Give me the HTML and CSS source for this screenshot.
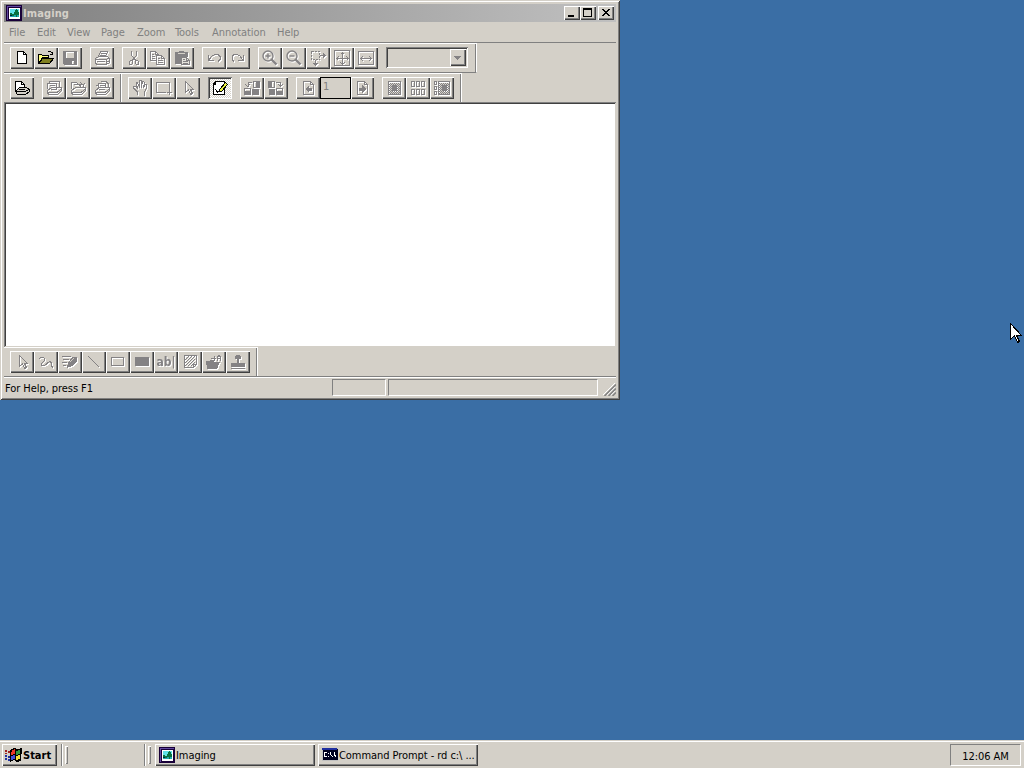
FILE: index.html
```html
<!DOCTYPE html>
<html lang="en">
<head>
    <meta charset="UTF-8">
    <title>Imaging</title>
    <link rel="stylesheet" href="styles.css">
</head>
<body>
    <svg width="0" height="0" class="defs">
        <symbol id="app" viewBox="0 0 16 16">
            <path fill="#180038" d="M0 0h16v16H0z"/><path fill="#6048a0" d="M1 1h14v1H2v13H1z"/>
            <path fill="#fff" d="M3 3h11v11H3z"/><path fill="#60e0e8" d="M4 4h9v5H4z"/><path fill="#20a8b0" d="M4 9h9v3H4z"/>
            <path fill="#087040" d="M10 4h1v1h1v2h1v3h-2v2h-1v-2H8V7h1V5h1zM4 8h2v1h2v2H4z"/><path fill="#002040" d="M4 10h2v1H4z"/>
        </symbol>
        <symbol id="arrow" viewBox="0 0 16 16"><path class="l" d="M5.5 1.5v11l3-3 2 5 2-1-2-4h3z"/></symbol>
    </svg>

    <div class="window">
        <div class="titlebar">
            <svg class="icon"><use href="#app"/></svg>
            <span class="title">Imaging</span>
            <button class="cap"><svg viewBox="0 0 12 10"><path d="M2 7h6v2H2z"/></svg></button>
            <button class="cap"><svg viewBox="0 0 12 10"><path fill-rule="evenodd" d="M1 0h9v9H1zM2 2v6h7V2z"/></svg></button>
            <button class="cap close"><svg viewBox="0 0 12 10"><path d="M2 1h2v1h1v1h2V2h1V1h2v1H9v1H8v1H7v1h1v1h1v1h1v1H8V7H7V6H5v1H4v1H2V7h1V6h1V5h1V4H4V3H3V2H2z"/></svg></button>
        </div>
        <div class="menu">
            <span class="m1">File</span><span class="m2">Edit</span><span class="m3">View</span><span class="m4">Page</span><span class="m5">Zoom</span><span class="m6">Tools</span><span class="m7">Annotation</span><span class="m8">Help</span>
        </div>
        <div class="toolbars">
            <div class="band standard">
                <div class="group">
                    <button class="on"><svg class="icon"><path fill="#fff" stroke="#000" d="M3.5 1.5h6l3 3v9h-9z"/><path class="l" stroke="#000" d="M9.5 1.5v3h3"/></svg></button>
                    <button class="on"><svg class="icon"><path fill="#ffff80" stroke="#000" d="M.5 13.5v-9h3l1 1h6v2h-6z"/><path fill="#808020" stroke="#000" d="M.5 13.5l4-5h11l-4 5z"/><path class="l" stroke="#000" d="M9.5 2.5l1-1h2l2 2m0-2v3h-3"/></svg></button>
                    <button><svg class="icon"><path class="s" fill-rule="evenodd" d="M1 1h14v14H2L1 14zM4 2v6h8V2zM10 11v3h2v-3z"/></svg></button>
                </div>
                <div class="group">
                    <button><svg class="icon"><path class="l" d="M4.5 6.5l2-5h7l-2 5M6.5 3.5h5m-6 2h5M1.5 8.5l3-2h9l2 2v4l-3 2h-10l-1-2zM1.5 9.5h11v4M12.5 9.5l3-2M3 11.5h8m2 0h2"/></svg></button>
                </div>
                <div class="group">
                    <button><svg class="icon"><path class="l" d="M5.5 1v4l2 3 2 2M10.5 1v4l-2 3-2 2M4.5 10.5h2v3l-1 1h-2v-3zM9.5 10.5h2l1 1v3h-2l-1-1z"/></svg></button>
                    <button><svg class="icon"><path class="l" d="M6 10.5H.5v-9h5l3 3M5.5 1.5v3h3M2 4.5h2m-2 2h3m-3 2h3M6.5 5.5h5l3 3v6h-8zM11.5 5.5v3h3M8 8.5h2m-2 2h5m-5 2h5"/></svg></button>
                    <button><svg class="icon"><path class="s" d="M1 2h4V1h5v1h4v5H7v7H1z"/><path fill="#d4d0c8" d="M4 3h7v1H4z"/><path fill="#e4e2dc" stroke="#848284" d="M7.5 7.5h5l3 3v4h-8z"/><path class="l" d="M9 9.5h2m-2 2h5m-5 2h5M12.5 7.5v3h3"/></svg></button>
                </div>
                <div class="group">
                    <button><svg class="icon"><path class="l" d="M2.5 5v5.5H8M3 10l3-4 3-1.5h3l2 2v3l-2 2"/></svg></button>
                    <button><svg class="icon"><path class="l" d="M13.5 5v5.5H8M13 10l-3-4-3-1.5H4l-2 2v3l2 2"/></svg></button>
                </div>
                <div class="group">
                    <button><svg class="icon smooth"><circle class="l bold" cx="6" cy="6" r="5"/><path class="l bold" d="M3.500 6h5M6 3.500v5"/><path class="l handle-line" d="M9.500 9.500l5 5"/></svg></button>
                    <button><svg class="icon smooth"><circle class="l bold" cx="6" cy="6" r="5"/><path class="l bold" d="M3.500 6h5"/><path class="l handle-line" d="M9.500 9.500l5 5"/></svg></button>
                    <button><svg class="icon"><path class="l dot" d="M1.5 1.5h8v8h-8z"/><path class="l" d="M10 5.5h5M13 3.5l2 2-2 2M5.5 10v5M3.5 13l2 2 2-2"/></svg></button>
                    <button><svg class="icon"><path class="l" d="M.5.5h15v15H.5zM8.500 2v12M2 8.500h12M6.500 4.500l2-2 2 2M6.500 12.500l2 2 2-2M4.500 6.500l-2 2 2 2M12.500 6.500l2 2-2 2"/></svg></button>
                    <button><svg class="icon"><path class="l" d="M.5 1.5h15v13H.5zM2 8.5h12M5 6L2.5 8.5 5 11M11 6l2.5 2.5L11 11"/></svg></button>
                </div>
                <div class="combo"><span><svg viewBox="0 0 8 4"><path class="s" d="M0 0h7v1H6v1H5v1H4v1H3V3H2V2H1V1H0z"/></svg></span></div>
            </div>
            <div class="band imaging">
                <div class="group">
                    <button class="on"><svg class="icon"><path fill="#fff" stroke="#000" d="M1.5 11.5v-10h6l3 3v4l-7 4z"/><path class="l" stroke="#000" d="M7.5 1.5v3h3"/><path fill="#d4d0c8" stroke="#000" d="M1.500 11.500l4-4h7l3 2v2l-4 3h-8z"/><path class="l" stroke="#000" d="M2 11.500h9l4-2M5 9.500h6"/></svg></button>
                </div>
                <div class="group">
                    <button><svg class="icon"><path class="l" d="M1.5 9V3.5h9V9M3.5 3V1.5h10v5M4 5.5h5M1.5 10.5l4-3h10v3l-4 4h-9l-1-2zM2 12.500h9l4-3M5 9.5h6"/></svg></button>
                    <button><svg class="icon"><path class="l" d="M1.5 9V2.5h5l2 2h5v3M4 4.5h5l2 2M1.5 10.5l4-3h10v3l-4 4h-9l-1-2zM2 12.500h9l4-3M10 2l3 3 2-2"/></svg></button>
                    <button><svg class="icon"><path class="l" d="M4.5 8V3.5h7V8M7 1.5h5l2 2v3M2 5.5h3m1 0h5M1.5 10.5l4-3h10v3l-4 4h-9l-1-2zM2 12.500h9l4-3M5 9.5h6"/></svg></button>
                </div>
                <i class="vsep"></i>
                <div class="group">
                    <button><svg class="icon"><path class="l" d="M5.5 15v-3l-4-4v-2h2l2 2-1-5V2.5h1l2 5V.5h2v7l1-6h1l1 1-1 5 2-3h1v3l-2 5v3"/></svg></button>
                    <button><svg class="icon"><path class="l" d="M10 12.5H.5v-10h13V10M11 12.5h5M13.5 10v5"/></svg></button>
                    <button><svg class="icon"><use href="#arrow"/></svg></button>
                </div>
                <div class="group">
                    <button class="on pressed"><svg class="icon"><path fill="#fff" stroke="#000" stroke-width="1.500" d="M3.5 1.5h9v13h-11v-10zM3.5 1.5v3h-2"/><path fill="none" stroke="#000" d="M3.500 9.500l2 2.500 3-1"/><path fill="#e8f040" stroke="#000" d="M7.5 9.500l6-7 2 2-6 7h-2z"/></svg></button>
                </div>
                <div class="group">
                    <button><svg class="icon"><path class="l" d="M9.5 1.5h6v6h-6zM8 2.5h-4v4M1.500 4.500l2 2 2-2M.5 8.5h6v6h-6z"/><path class="s" d="M12 2h4v6h-4zM8 9h7v6H8zM1 11h5v4H1z"/></svg></button>
                    <button><svg class="icon"><path class="l" d="M.5 1.5h6v6h-6zM8 2.5h4v4M10.500 4.500l2 2 2-2M8.5 8.500h6v6h-6z"/><path class="s" d="M1 2h3v6H1zM1 9h6v6H1zM9 11h5v4H9z"/></svg></button>
                </div>
                <div class="group">
                    <button><svg class="icon"><path class="l" d="M3.5 1.5h7l3 3v10h-10zM10.5 1.5v3h3"/><path class="s" d="M5 9l4-4v3h3v3H9v2z"/></svg></button>
                    <span class="page">1</span>
                    <button class="next"><svg class="icon"><path class="l" d="M2.5 1.5h7l3 3v10h-10zM9.5 1.5v3h3"/><path class="s" d="M11 9L7 5v3H4v3h3v2z"/></svg></button>
                </div>
                <div class="group">
                    <button><svg class="icon"><path class="l" d="M2.5 1.5h12v13h-12z"/><path class="l mesh" d="M4 3.5h10M4 5.5h10M4 7.5h10M4 9.5h10M4 11.5h10M4 13.5h10M3 4.500h11M3 6.500h11M3 8.500h11M3 10.500h11M3 12.500h11"/><path class="s" d="M6 5h5v6H6z"/></svg></button>
                    <button><svg class="icon"><path class="l" d="M1.5 1.5h3v5h-3zM6.5 1.5h3v5h-3zM11.5 1.5h3v5h-3zM1.5 9.5h3v5h-3zM6.5 9.5h3v5h-3zM11.5 9.5h3v5h-3z"/></svg></button>
                    <button><svg class="icon"><path class="l" d="M.5 1.5h2v3h-2zM.5 6.5h2v3h-2zM.5 11.5h2v3h-2zM4.5 1.5h11v13h-11z"/><path class="l mesh" d="M5 3.5h10M5 5.5h10M5 7.5h10M5 9.5h10M5 11.5h10M5 13.5h10M6 4.500h9M6 6.500h9M6 8.500h9M6 10.500h9M6 12.500h9"/><path class="s" d="M8 5h5v6H8z"/></svg></button>
                </div>
            </div>
        </div>
        <div class="view"></div>
        <div class="annotations">
            <div class="group">
                <button><svg class="icon"><use href="#arrow"/></svg></button>
                <button><svg class="icon"><path class="l" d="M.5 5.5l2-2h3l1 1v2l-3 3v2h3l5-4h1l1 2v3l2 1"/></svg></button>
                <button><svg class="icon"><path class="l" d="M0 2.5h9M1 5.5h6M0 8.5h5M1 11.5h3"/><path class="s" d="M10 3h5v4l-5 5-5 2 1-5z"/><path stroke="#d4d0c8" d="M8 8l4-4"/></svg></button>
                <button><svg class="icon"><path class="l" d="M2.5 2.5l11 11"/></svg></button>
                <button><svg class="icon"><path class="l" d="M1.5 3.5h12v8h-12z"/></svg></button>
                <button><svg class="icon"><path class="s" d="M1 3h14v9H1z"/></svg></button>
                <button><span class="ab">ab|</span></button>
                <button><svg class="icon"><path class="l" d="M2.5 1.5h12v9l-3 3h-9zM14 10.5h-3v3M3 6l4-4M3 9l7-7M3 12l10-10M6 12l7-7M9 12l4-4"/></svg></button>
                <button><svg class="icon"><path class="s" d="M0 7h4V6h4v2h6l-3 7H1z"/><path class="l" d="M5 4.5h5M8.5 2v5M11.5 7V3.5l1-2h1l1 2V7M12 4.5h3"/></svg></button>
                <button><svg class="icon"><path class="s" d="M6 1h4v1h1v3H9v4h6v4H1V9h6V5H5V2h1zM1 14h14v1H1z"/></svg></button>
            </div>
        </div>
        <div class="status">
            <span class="help">For Help, press F1</span>
            <span class="pane small"></span>
            <span class="pane large"></span>
            <svg class="grip" viewBox="0 0 13 13"><path stroke="#fff" d="M0 12L12 0M4 12l8-8M8 12l4-4"/><path stroke="#808080" stroke-width="1.5" d="M1.5 13L13 1.5M5.5 13L13 5.5M9.5 13L13 9.5"/></svg>
        </div>
    </div>

    <div class="taskbar">
        <button class="start"><svg viewBox="0 0 18 16"><path fill="#000" d="M5 3l4-2 3 1 5-1-1 13-4 1-3-2-4 2z"/><path fill="#a02020" d="M0 3h2v2H0zM3 4h2v2H3zM0 6h2v1H0z"/><path fill="#2030a0" d="M0 8h2v2H0zM3 9h2v2H3zM0 11h2v2H0zM3 12h2v2H3z"/><path fill="#e83828" d="M7 3l3-1v5L6 8z"/><path fill="#309840" d="M11 4l4-1v4l-4 1z"/><path fill="#4050d8" d="M6 9l4-1v4l-4 1z"/><path fill="#f0e040" d="M11 9l4-1v4l-4 1z"/></svg><span>Start</span></button>
        <i class="vsep"></i><i class="handle"></i>
        <div class="quick"></div>
        <i class="vsep"></i><i class="handle"></i>
        <button class="task first"><svg class="icon"><use href="#app"/></svg><span>Imaging</span></button>
        <button class="task"><svg class="icon" viewBox="0 0 16 16"><path fill="#c0c0c0" d="M0 1h16v13H0z"/><path fill="#000020" d="M1 2h15v11H1z"/><path fill="#2030a0" d="M0 1h15v2H0z"/><path fill="none" stroke="#fff" d="M5 5.5H2.5v4H5M6.5 6v1m0 2v1M8.5 5v2l2 3M12.5 5v2l1 3"/></svg><span>Command Prompt - rd c:\ ...</span></button>
        <div class="tray"><span>12:06 AM</span></div>
    </div>
    <svg class="cursor" viewBox="0 0 12 21"><path fill="#fff" stroke="#000" d="M.5.5v16l4-4 3 7 2-1-3-6h5z"/></svg>
</body>
</html>
```
FILE: styles.css
```css
* {
    box-sizing: border-box;
}
body {
    margin: 0;
    width: 1024px;
    height: 768px;
    overflow: hidden;
    background: #3a6ea5;
    font: 11px/14px "DejaVu Sans Condensed", "DejaVu Sans", sans-serif;
    font-stretch: condensed;
    letter-spacing: -0.06px;
    color: #000;
    display: flex;
    flex-direction: column;
    justify-content: space-between;
}
.defs {
    position: absolute;
}
svg {
    display: block;
    flex: none;
    shape-rendering: crispEdges;
}
.icon {
    width: 16px;
    height: 16px;
}
.smooth {
    shape-rendering: auto;
}
.l {
    fill: none;
    stroke: #848284;
}
.on .l {
    stroke: #000;
}
.s {
    fill: #848284;
}
.bold {
    stroke-width: 1.4;
}
.handle-line {
    stroke-width: 2.4;
}
.dot {
    stroke-dasharray: 2 1;
}
.mesh {
    stroke-dasharray: 1 1;
}
button {
    margin: 0;
    padding: 0;
    border: 0;
    background: #d4d0c8;
    color: #000;
    font: inherit;
    letter-spacing: inherit;
    display: flex;
    align-items: center;
    box-shadow: inset 1px 1px #fff, inset -1px -1px #404040, inset -2px -2px #808080;
}

/* window */
.window {
    width: 620px;
    height: 400px;
    padding: 4px;
    background: #d4d0c8;
    box-shadow: inset 1px 1px #d4d0c8, inset -1px -1px #404040, inset 2px 2px #fff, inset -2px -2px #808080;
}
.titlebar {
    height: 18px;
    padding: 0 2px;
    display: flex;
    align-items: center;
    background: linear-gradient(to right, #808080, #c0c0c0);
}
.title {
    flex: 1;
    margin-left: 1px;
    padding-top: 2px;
    color: #d4d0c8;
    font-weight: bold;
    letter-spacing: 0.1px;
}
.cap {
    width: 16px;
    height: 14px;
    padding: 2px;
}
.cap svg {
    width: 12px;
    height: 10px;
}
.close {
    margin-left: 2px;
}
.menu {
    height: 20px;
    padding: 2px 0 0 5px;
    display: flex;
    align-items: center;
    color: #808080;
}
.m1 { width: 28px; }
.m2 { width: 30px; }
.m3 { width: 34px; }
.m4 { width: 36px; }
.m5 { width: 38px; }
.m6 { width: 37px; }
.m7 { width: 65px; }

/* toolbars */
.toolbars {
    border-top: 1px solid #808080;
}
.band {
    display: flex;
    align-items: flex-start;
    height: 30px;
    border-top: 1px solid #fff;
    border-right: 1px solid #fff;
    padding: 3px 0 0 6px;
    box-shadow: inset -1px 0 #808080;
}
.standard {
    width: 473px;
    border-bottom: 1px solid #808080;
}
.imaging {
    width: 458px;
    height: 29px;
}
.group {
    display: flex;
    flex: none;
    margin-right: 8px;
}
.group button {
    flex: none;
    width: 24px;
    height: 22px;
    justify-content: center;
}
.group button:not(.on) .icon,
.ab {
    filter: drop-shadow(1px 1px 0 #fff);
}
.group .pressed {
    background: repeating-conic-gradient(#fff 0 25%, #d4d0c8 0 50%) 0 0 / 2px 2px;
    box-shadow: inset 1px 1px #808080, inset -1px -1px #fff, inset 2px 2px #404040;
}
.vsep {
    flex: none;
    width: 2px;
    height: 28px;
    background: linear-gradient(to right, #808080 50%, #fff 50%);
}
.imaging .vsep {
    margin: -3px 6px 0 -2px;
}
.combo {
    flex: none;
    width: 82px;
    height: 21px;
    padding: 2px;
    display: flex;
    justify-content: flex-end;
    box-shadow: inset 1px 1px #808080, inset -1px -1px #fff, inset 2px 2px #404040;
}
.combo span {
    width: 16px;
    display: flex;
    align-items: center;
    justify-content: center;
    box-shadow: inset 1px 1px #fff, inset -1px -1px #404040, inset -2px -2px #808080;
}
.combo svg {
    width: 8px;
    height: 4px;
}
.page {
    width: 31px;
    height: 22px;
    padding: 2px;
    border: 1px solid #000;
    color: #808080;
}
.group .next {
    width: 23px;
}
.view {
    height: 245px;
    background: #fff;
    box-shadow: inset 1px 1px #808080, inset -1px -1px #d4d0c8, inset 2px 2px #404040;
}
.annotations {
    width: 254px;
    height: 29px;
    padding: 3px 0 0 6px;
    border-top: 1px solid #fff;
    border-right: 1px solid #fff;
    box-shadow: inset -1px 0 #808080;
}
.ab {
    color: #848284;
    font: bold 12px/14px "DejaVu Sans Condensed", sans-serif;
}

/* status bar */
.status {
    height: 21px;
    padding: 2px 0 0 1px;
    display: flex;
    border-top: 1px solid #808080;
    box-shadow: inset 0 1px #fff;
}
.help {
    width: 327px;
    padding-top: 1px;
    line-height: 18px;
}
.pane {
    height: 17px;
    margin-right: 2px;
    border: 1px solid;
    border-color: #808080 #fff #fff #808080;
}
.small {
    width: 54px;
}
.large {
    width: 210px;
}
.grip {
    width: 13px;
    height: 13px;
    margin: 4px 0 0 3px;
    shape-rendering: auto;
}

/* taskbar */
.taskbar {
    height: 28px;
    padding: 4px 3px 2px 2px;
    display: flex;
    background: #d4d0c8;
    box-shadow: inset 0 1px #d4d0c8, inset 0 2px #fff;
}
.taskbar button {
    height: 22px;
}
.start {
    width: 55px;
    padding-left: 3px;
    font-weight: bold;
}
.start svg {
    width: 18px;
    height: 16px;
}
.start span {
    padding-top: 2px;
    letter-spacing: 0;
}
.taskbar .vsep {
    height: 22px;
    margin-left: 4px;
}
.handle {
    width: 3px;
    height: 18px;
    margin: 2px 0 0 2px;
    box-shadow: inset 1px 1px #fff, inset -1px -1px #808080;
}
.quick {
    width: 72px;
}
.task {
    width: 160px;
    padding-left: 4px;
}
.task span {
    margin-left: 1px;
    padding-top: 2px;
    white-space: nowrap;
}
.first {
    margin: 0 3px 0 4px;
}
.tray {
    width: 71px;
    height: 22px;
    margin-left: auto;
    border: 1px solid;
    border-color: #808080 #fff #fff #808080;
    text-align: center;
    line-height: 23px;
}
.cursor {
    position: absolute;
    left: 1010px;
    top: 323px;
    width: 12px;
    height: 21px;
}
```
